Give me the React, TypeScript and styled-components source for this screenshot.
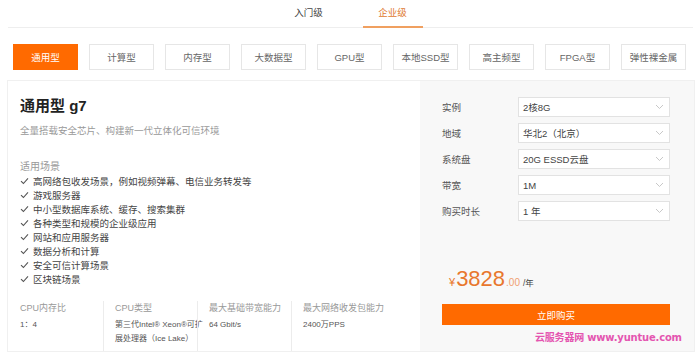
import styled, { createGlobalStyle } from "styled-components"

const GlobalStyle = createGlobalStyle`
    html, body {
        margin: 0;
        padding: 0;
        background: #fff;
        font-family: "Liberation Sans", "Noto Sans CJK SC", sans-serif;
        color: #333;
    }
`

const categories = [
    "通用型",
    "计算型",
    "内存型",
    "大数据型",
    "GPU型",
    "本地SSD型",
    "高主频型",
    "FPGA型",
    "弹性裸金属",
]

const scenes = [
    "高网络包收发场景，例如视频弹幕、电信业务转发等",
    "游戏服务器",
    "中小型数据库系统、缓存、搜索集群",
    "各种类型和规模的企业级应用",
    "网站和应用服务器",
    "数据分析和计算",
    "安全可信计算场景",
    "区块链场景",
]

const specs = [
    { label: "CPU内存比", value: ["1：4"] },
    { label: "CPU类型", value: ["第三代Intel® Xeon®可扩", "展处理器（Ice Lake）"] },
    { label: "最大基础带宽能力", value: ["64 Gbit/s"] },
    { label: "最大网络收发包能力", value: ["2400万PPS"] },
]

const options = [
    { label: "实例", value: "2核8G" },
    { label: "地域", value: "华北2（北京）" },
    { label: "系统盘", value: "20G ESSD云盘" },
    { label: "带宽", value: "1M" },
    { label: "购买时长", value: "1 年" },
]

function Chevron() {
    return (
        <svg width="9" height="6" viewBox="0 0 9 6">
            <path d="M1 1 L4.5 4.5 L8 1" fill="none" stroke="#c8c8c8" strokeWidth="1" />
        </svg>
    )
}

function Check() {
    return (
        <svg width="9" height="8" viewBox="0 0 9 8">
            <path d="M1 4.2 L3.4 6.5 L8 1.3" fill="none" stroke="#555" strokeWidth="1.1" />
        </svg>
    )
}

function App() {
    return (
        <>
            <GlobalStyle />
            <Page>
                <Tabs>
                    <Tab>入门级</Tab>
                    <Tab active>企业级</Tab>
                </Tabs>

                <Categories>
                    {categories.map((c, i) => (
                        <Category key={c} active={i === 0}>
                            {c}
                        </Category>
                    ))}
                </Categories>

                <Card>
                    <Left>
                        <Title>通用型 g7</Title>
                        <Subtitle>全量搭载安全芯片、构建新一代立体化可信环境</Subtitle>

                        <SceneTitle>适用场景</SceneTitle>
                        <SceneList>
                            {scenes.map((s) => (
                                <SceneItem key={s}>
                                    <Check />
                                    {s}
                                </SceneItem>
                            ))}
                        </SceneList>

                        <Specs>
                            {specs.map((s) => (
                                <Spec key={s.label}>
                                    <SpecLabel>{s.label}</SpecLabel>
                                    {s.value.map((v) => (
                                        <SpecValue key={v}>{v}</SpecValue>
                                    ))}
                                </Spec>
                            ))}
                        </Specs>
                    </Left>

                    <Right>
                        <Form>
                            {options.map((o) => (
                                <FormRow key={o.label}>
                                    <FormLabel>{o.label}</FormLabel>
                                    <Select>
                                        {o.value}
                                        <Chevron />
                                    </Select>
                                </FormRow>
                            ))}
                        </Form>

                        <Price>
                            <Yen>¥</Yen>
                            <Amount>3828</Amount>
                            <Cents>.00</Cents>
                            <Unit>/年</Unit>
                        </Price>

                        <BuyButton>立即购买</BuyButton>
                        <Watermark>云服务器网 www.yuntue.com</Watermark>
                    </Right>
                </Card>
            </Page>
        </>
    )
}

export default App

const Page = styled.div`
    width: 700px;
    height: 358px;
    overflow: hidden;
    box-sizing: border-box;
    padding: 0 5px 0 7px;
`

const Tabs = styled.div`
    display: flex;
    justify-content: center;
    gap: 24px;
    margin: 0 2px 0 1px;
    height: 27px;
    border-bottom: 1px solid #eeeeee;
`

const Tab = styled.div<{ active?: boolean }>`
    width: 60px;
    text-align: center;
    font-size: 9.5px;
    line-height: 26px;
    color: ${(p) => (p.active ? "#e07a30" : "#444")};
    border-bottom: 2px solid ${(p) => (p.active ? "#f0a060" : "transparent")};
    margin-bottom: -1px;
`

const Categories = styled.div`
    display: flex;
    gap: 11px;
    padding: 16px 0 0 6px;
    height: 26px;
`

const Category = styled.div<{ active?: boolean }>`
    width: 65px;
    height: 26px;
    flex-shrink: 0;
    box-sizing: border-box;
    display: flex;
    justify-content: center;
    align-items: center;
    font-size: 9.5px;
    color: ${(p) => (p.active ? "#fff" : "#666")};
    background: ${(p) => (p.active ? "#ff6a00" : "#fff")};
    border: 1px solid ${(p) => (p.active ? "#ff6a00" : "#e6e6e6")};
`

const Card = styled.div`
    margin-top: 10px;
    display: flex;
    height: 272px;
    border: 1px solid #f0f0f0;
    box-sizing: border-box;
`

const Left = styled.div`
    width: 412px;
    flex-shrink: 0;
    box-sizing: border-box;
    padding: 14px 0 0 12px;
    display: flex;
    flex-direction: column;
`

const Title = styled.div`
    font-size: 15px;
    font-weight: bold;
    color: #222;
    line-height: 22px;
`

const Subtitle = styled.div`
    margin-top: 6px;
    font-size: 9.5px;
    color: #999;
`

const SceneTitle = styled.div`
    margin-top: 21px;
    font-size: 10px;
    color: #999;
`

const SceneList = styled.div`
    margin-top: 1px;
    display: flex;
    flex-direction: column;
`

const SceneItem = styled.div`
    display: flex;
    align-items: center;
    gap: 4px;
    height: 14px;
    font-size: 9.5px;
    color: #444;
`

const Specs = styled.div`
    margin-top: 15px;
    display: flex;
`

const Spec = styled.div`
    width: 94px;
    box-sizing: border-box;
    padding-left: 11px;
    border-left: 1px solid #ececec;
    height: 50px;
    white-space: nowrap;

    &:first-child {
        width: 83px;
        padding-left: 0;
        border-left: none;
    }
`

const SpecLabel = styled.div`
    font-size: 9px;
    color: #999;
    line-height: 14px;
    margin-bottom: 3px;
`

const SpecValue = styled.div`
    font-size: 8px;
    color: #555;
    line-height: 14px;
`

const Right = styled.div`
    flex: 1;
    min-width: 0;
    background: #f8f8f8;
    padding: 16px 0 0 22px;
    display: flex;
    flex-direction: column;
`

const Form = styled.div`
    display: flex;
    flex-direction: column;
    gap: 6px;
`

const FormRow = styled.div`
    display: flex;
    align-items: center;
`

const FormLabel = styled.div`
    width: 76px;
    font-size: 9.5px;
    color: #555;
`

const Select = styled.div`
    width: 152px;
    height: 20px;
    box-sizing: border-box;
    border: 1px solid #e2e2e2;
    background: #fff;
    display: flex;
    align-items: center;
    justify-content: space-between;
    padding: 0 5px 0 4px;
    font-size: 9.5px;
    color: #444;
`

const Price = styled.div`
    margin-top: 45px;
    padding-left: 7px;
    display: flex;
    align-items: baseline;
    color: #e8772e;
`

const Yen = styled.span`
    font-size: 11px;
    margin-right: 1px;
`

const Amount = styled.span`
    font-size: 22px;
`

const Cents = styled.span`
    font-size: 10px;
    color: #f0a070;
    margin-left: 1px;
    margin-right: 3px;
`

const Unit = styled.span`
    font-size: 8.5px;
    color: #444;
`

const BuyButton = styled.div`
    margin-top: 12px;
    width: 228px;
    height: 21px;
    background: #ff6a00;
    color: #fff;
    font-size: 9.5px;
    display: flex;
    justify-content: center;
    align-items: center;
`

const Watermark = styled.div`
    margin-top: 4px;
    margin-left: 93px;
    font-size: 10px;
    letter-spacing: -0.2px;
    font-weight: bold;
    color: #e455b0;
    white-space: nowrap;
    font-family: "DejaVu Sans", "Noto Sans CJK SC", sans-serif;
`
